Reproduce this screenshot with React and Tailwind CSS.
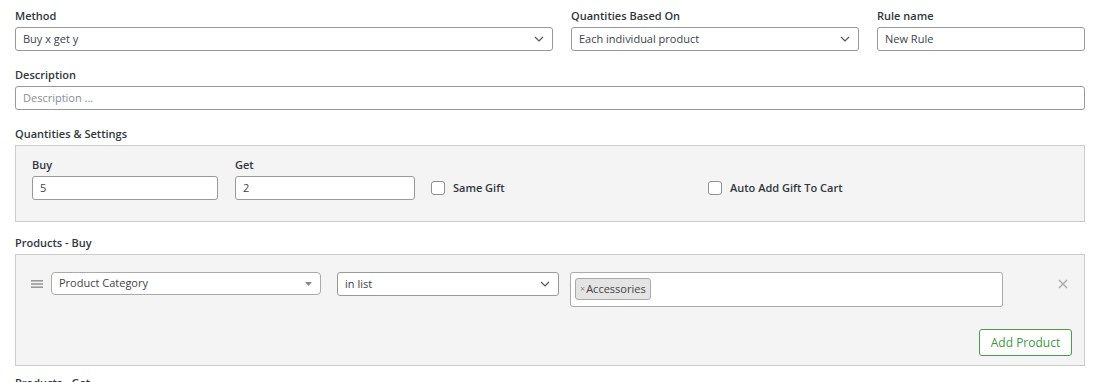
import React from "react"

const font = { fontFamily: '"Open Sans", "Noto Sans", sans-serif' }

function Chevron() {
  return (
    <svg width="10" height="6" viewBox="0 0 10 6" className="shrink-0">
      <path d="M1 1l4 4 4-4" fill="none" stroke="#50575e" strokeWidth="1.2" />
    </svg>
  )
}

function Label({ children }) {
  return <div className="block text-[11px] leading-4 font-semibold text-[#32373c] mb-[3px]">{children}</div>
}

function Select({ value, className = "" }) {
  return (
    <div className={`h-6 flex items-center justify-between pl-[7px] pr-[8px] bg-white border border-[#999] rounded-[3px] text-[11px] text-[#3c434a] ${className}`}>
      <span>{value}</span>
      <Chevron />
    </div>
  )
}

function Input({ value, placeholder, className = "" }) {
  return (
    <div className={`h-6 flex items-center px-[7px] bg-white border border-[#999] rounded-[3px] text-[11px] ${value ? "text-[#3c434a]" : "text-[#8a8f94]"} ${className}`}>
      {value || placeholder}
    </div>
  )
}

function Checkbox({ label, className = "" }) {
  return (
    <div className={`flex items-center gap-[8px] h-6 ${className}`}>
      <span className="w-[14px] h-[14px] rounded-[3px] border border-[#8c8f94] bg-white" />
      <span className="text-[11px] font-semibold text-[#32373c]">{label}</span>
    </div>
  )
}

export default function App() {
  return (
    <div style={font} className="bg-white w-[1101px] h-[382px] overflow-hidden pt-2 px-[15px]">
      <div className="w-[1070px]">
        <div className="grid grid-cols-[538px_288px_1fr] gap-[18px]">
          <div>
            <Label>Method</Label>
            <Select value="Buy x get y" />
          </div>
          <div>
            <Label>Quantities Based On</Label>
            <Select value="Each individual product" />
          </div>
          <div>
            <Label>Rule name</Label>
            <Input value="New Rule" />
          </div>
        </div>

        <div className="mt-4">
          <Label>Description</Label>
          <Input placeholder="Description ..." />
        </div>

        <div className="mt-4">
          <Label>Quantities &amp; Settings</Label>
          <div className="bg-[#f4f4f4] border border-[#ccc] pt-[11px] pb-[21px] px-4 flex items-end">
            <div className="w-[186px]">
              <Label>Buy</Label>
              <Input value="5" />
            </div>
            <div className="w-[180px] ml-[17px]">
              <Label>Get</Label>
              <Input value="2" />
            </div>
            <Checkbox label="Same Gift" className="w-[277px] ml-4" />
            <Checkbox label="Auto Add Gift To Cart" />
          </div>
        </div>

        <div className="mt-[13px]">
          <Label>Products - Buy</Label>
          <div className="bg-[#f4f4f4] border border-[#ccc] pt-[17px] pb-[9px] pl-[15px] pr-[12px]">
            <div className="flex items-start">
              <div className="h-6 flex items-center w-[20px]">
                <svg width="12" height="8" viewBox="0 0 12 8">
                  <rect x="0" y="0" width="12" height="1.6" fill="#999" />
                  <rect x="0" y="3.2" width="12" height="1.6" fill="#999" />
                  <rect x="0" y="6.4" width="12" height="1.6" fill="#999" />
                </svg>
              </div>
              <div className="w-[270px] h-[23px] flex items-center justify-between pl-[7px] pr-[8px] bg-white border border-[#aaa] rounded-[4px] text-[11px] text-[#444]">
                <span>Product Category</span>
                <svg width="7" height="4" viewBox="0 0 7 4">
                  <path d="M0 0h7L3.5 4z" fill="#888" />
                </svg>
              </div>
              <Select value="in list" className="w-[222px] ml-4" />
              <div className="w-[433px] ml-[11px] h-[35px] bg-white border border-[#aaa] rounded-[3px] pl-[4px] pt-[5px] flex items-start">
                <span className="flex items-center h-[22px] px-[4px] bg-[#e4e4e4] border border-[#aaa] rounded-[3px] text-[11px] text-[#444]">
                  <span className="text-[9px] text-[#888] mr-[1px]">×</span>Accessories
                </span>
              </div>
              <div className="flex-1 h-6 flex items-center justify-end pr-[4px]">
                <svg width="10" height="10" viewBox="0 0 10 10">
                  <path d="M1 1l8 8M9 1l-8 8" stroke="#aaa" strokeWidth="1.4" />
                </svg>
              </div>
            </div>
            <div className="flex justify-end mt-[22px]">
              <button className="h-[27px] w-[93px] border border-[#46a046] rounded-[3px] bg-white text-[12px] font-medium text-[#3a9a3a]">
                Add Product
              </button>
            </div>
          </div>
        </div>

        <div className="mt-[9px]">
          <Label>Products - Get</Label>
        </div>
      </div>
    </div>
  )
}
